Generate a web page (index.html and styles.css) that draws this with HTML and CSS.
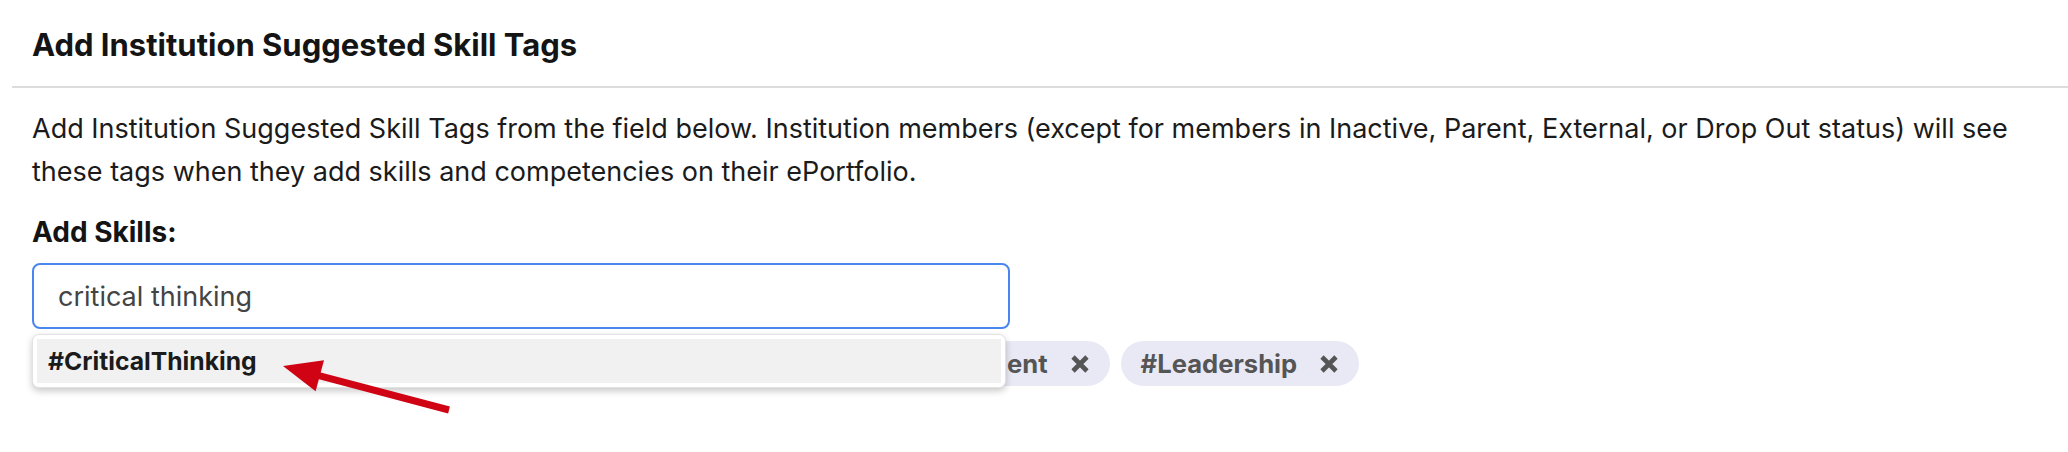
FILE: index.html
```html
<!DOCTYPE html>
<html lang="en">
<head>
<meta charset="utf-8">
<title>Add Institution Suggested Skill Tags</title>
<link rel="stylesheet" href="styles.css">
</head>
<body>
<div class="page">
  <div class="header">
    <h2 class="title">Add Institution Suggested Skill Tags</h2>
  </div>
  <div class="content">
    <p class="intro">Add Institution Suggested Skill Tags from the field below. Institution members (except for members in Inactive, Parent, External, or Drop Out status) will see these tags when they add skills and competencies on their ePortfolio.</p>
    <div class="label">Add Skills:</div>
    <div class="field">
      <div class="input">critical thinking</div>
      <div class="menu">
        <div class="menu-item">#CriticalThinking</div>
      </div>
    </div>
    <div class="tags">
      <span class="tag">#Collaboration <svg class="x" viewBox="0 0 18 18"><path d="M2 2L16 16M16 2L2 16"/></svg></span>
      <span class="tag">#Teamwork <svg class="x" viewBox="0 0 18 18"><path d="M2 2L16 16M16 2L2 16"/></svg></span>
      <span class="tag">#Creativity <svg class="x" viewBox="0 0 18 18"><path d="M2 2L16 16M16 2L2 16"/></svg></span>
      <span class="tag">#TimeManagement <svg class="x" viewBox="0 0 18 18"><path d="M2 2L16 16M16 2L2 16"/></svg></span>
      <span class="tag">#Leadership <svg class="x" viewBox="0 0 18 18"><path d="M2 2L16 16M16 2L2 16"/></svg></span>
    </div>
  </div>
  <svg class="arrow" viewBox="0 0 2068 452" width="2068" height="452">
    <line x1="449" y1="410" x2="318" y2="375.3" stroke="#cf0314" stroke-width="7"/>
    <polygon points="283,366 324,360.2 315.6,391.2" fill="#cf0314"/>
  </svg>
</div>
</body>
</html>
```
FILE: styles.css
```css
* { box-sizing: border-box; }
html, body { margin: 0; padding: 0; background: #fff; }
body {
  font-family: Inter, "Noto Sans", "Liberation Sans", sans-serif;
  color: #1b1b1b;
}
.page { position: relative; width: 2068px; height: 452px; overflow: hidden; }
.header {
  margin-left: 12px;
  height: 88px;
  border-bottom: 2px solid #dcdcdc;
  padding: 27px 0 0 20px;
}
.title {
  margin: 0;
  font-size: 31px;
  line-height: 36px;
  font-weight: 700;
  color: #141414;
}
.content { padding: 19px 32px 0 32px; }
.intro {
  margin: 0;
  font-size: 27px;
  line-height: 43px;
  color: #1b1b1b;
}
.label {
  margin-top: 22px;
  font-size: 28px;
  line-height: 34px;
  font-weight: 700;
  color: #141414;
}
.field { position: relative; margin-top: 14px; width: 978px; }
.input {
  height: 66px;
  border: 2px solid #4a86ef;
  border-radius: 8px;
  padding: 0 0 0 24px;
  display: flex;
  align-items: center;
  font-size: 27px;
  color: #444;
}
.menu {
  position: absolute;
  left: 0;
  top: 71px;
  width: 974px;
  height: 54px;
  background: #fff;
  border: 1px solid #e2e2e2;
  border-radius: 7px;
  box-shadow: 0 3px 7px rgba(0,0,0,0.22);
  padding: 4px;
  z-index: 2;
}
.menu-item {
  height: 100%;
  background: #f1f1f1;
  display: flex;
  align-items: center;
  padding-left: 11px;
  font-size: 24.7px;
  font-weight: 700;
  color: #1b1b1b;
}
.tags {
  margin-top: 12px;
  display: flex;
  gap: 11px;
}
.tag {
  height: 45px;
  border-radius: 23px;
  background: #e9e9f5;
  display: inline-flex;
  align-items: center;
  gap: 23px;
  padding: 0 21px 0 20px;
  font-size: 25.6px;
  font-weight: 700;
  color: #555;
  white-space: nowrap;
}
.x { width: 18px; height: 18px; flex: none; }
.x path { stroke: #555; stroke-width: 4.6; fill: none; }
.arrow { position: absolute; left: 0; top: 0; pointer-events: none; z-index: 3; }
```
